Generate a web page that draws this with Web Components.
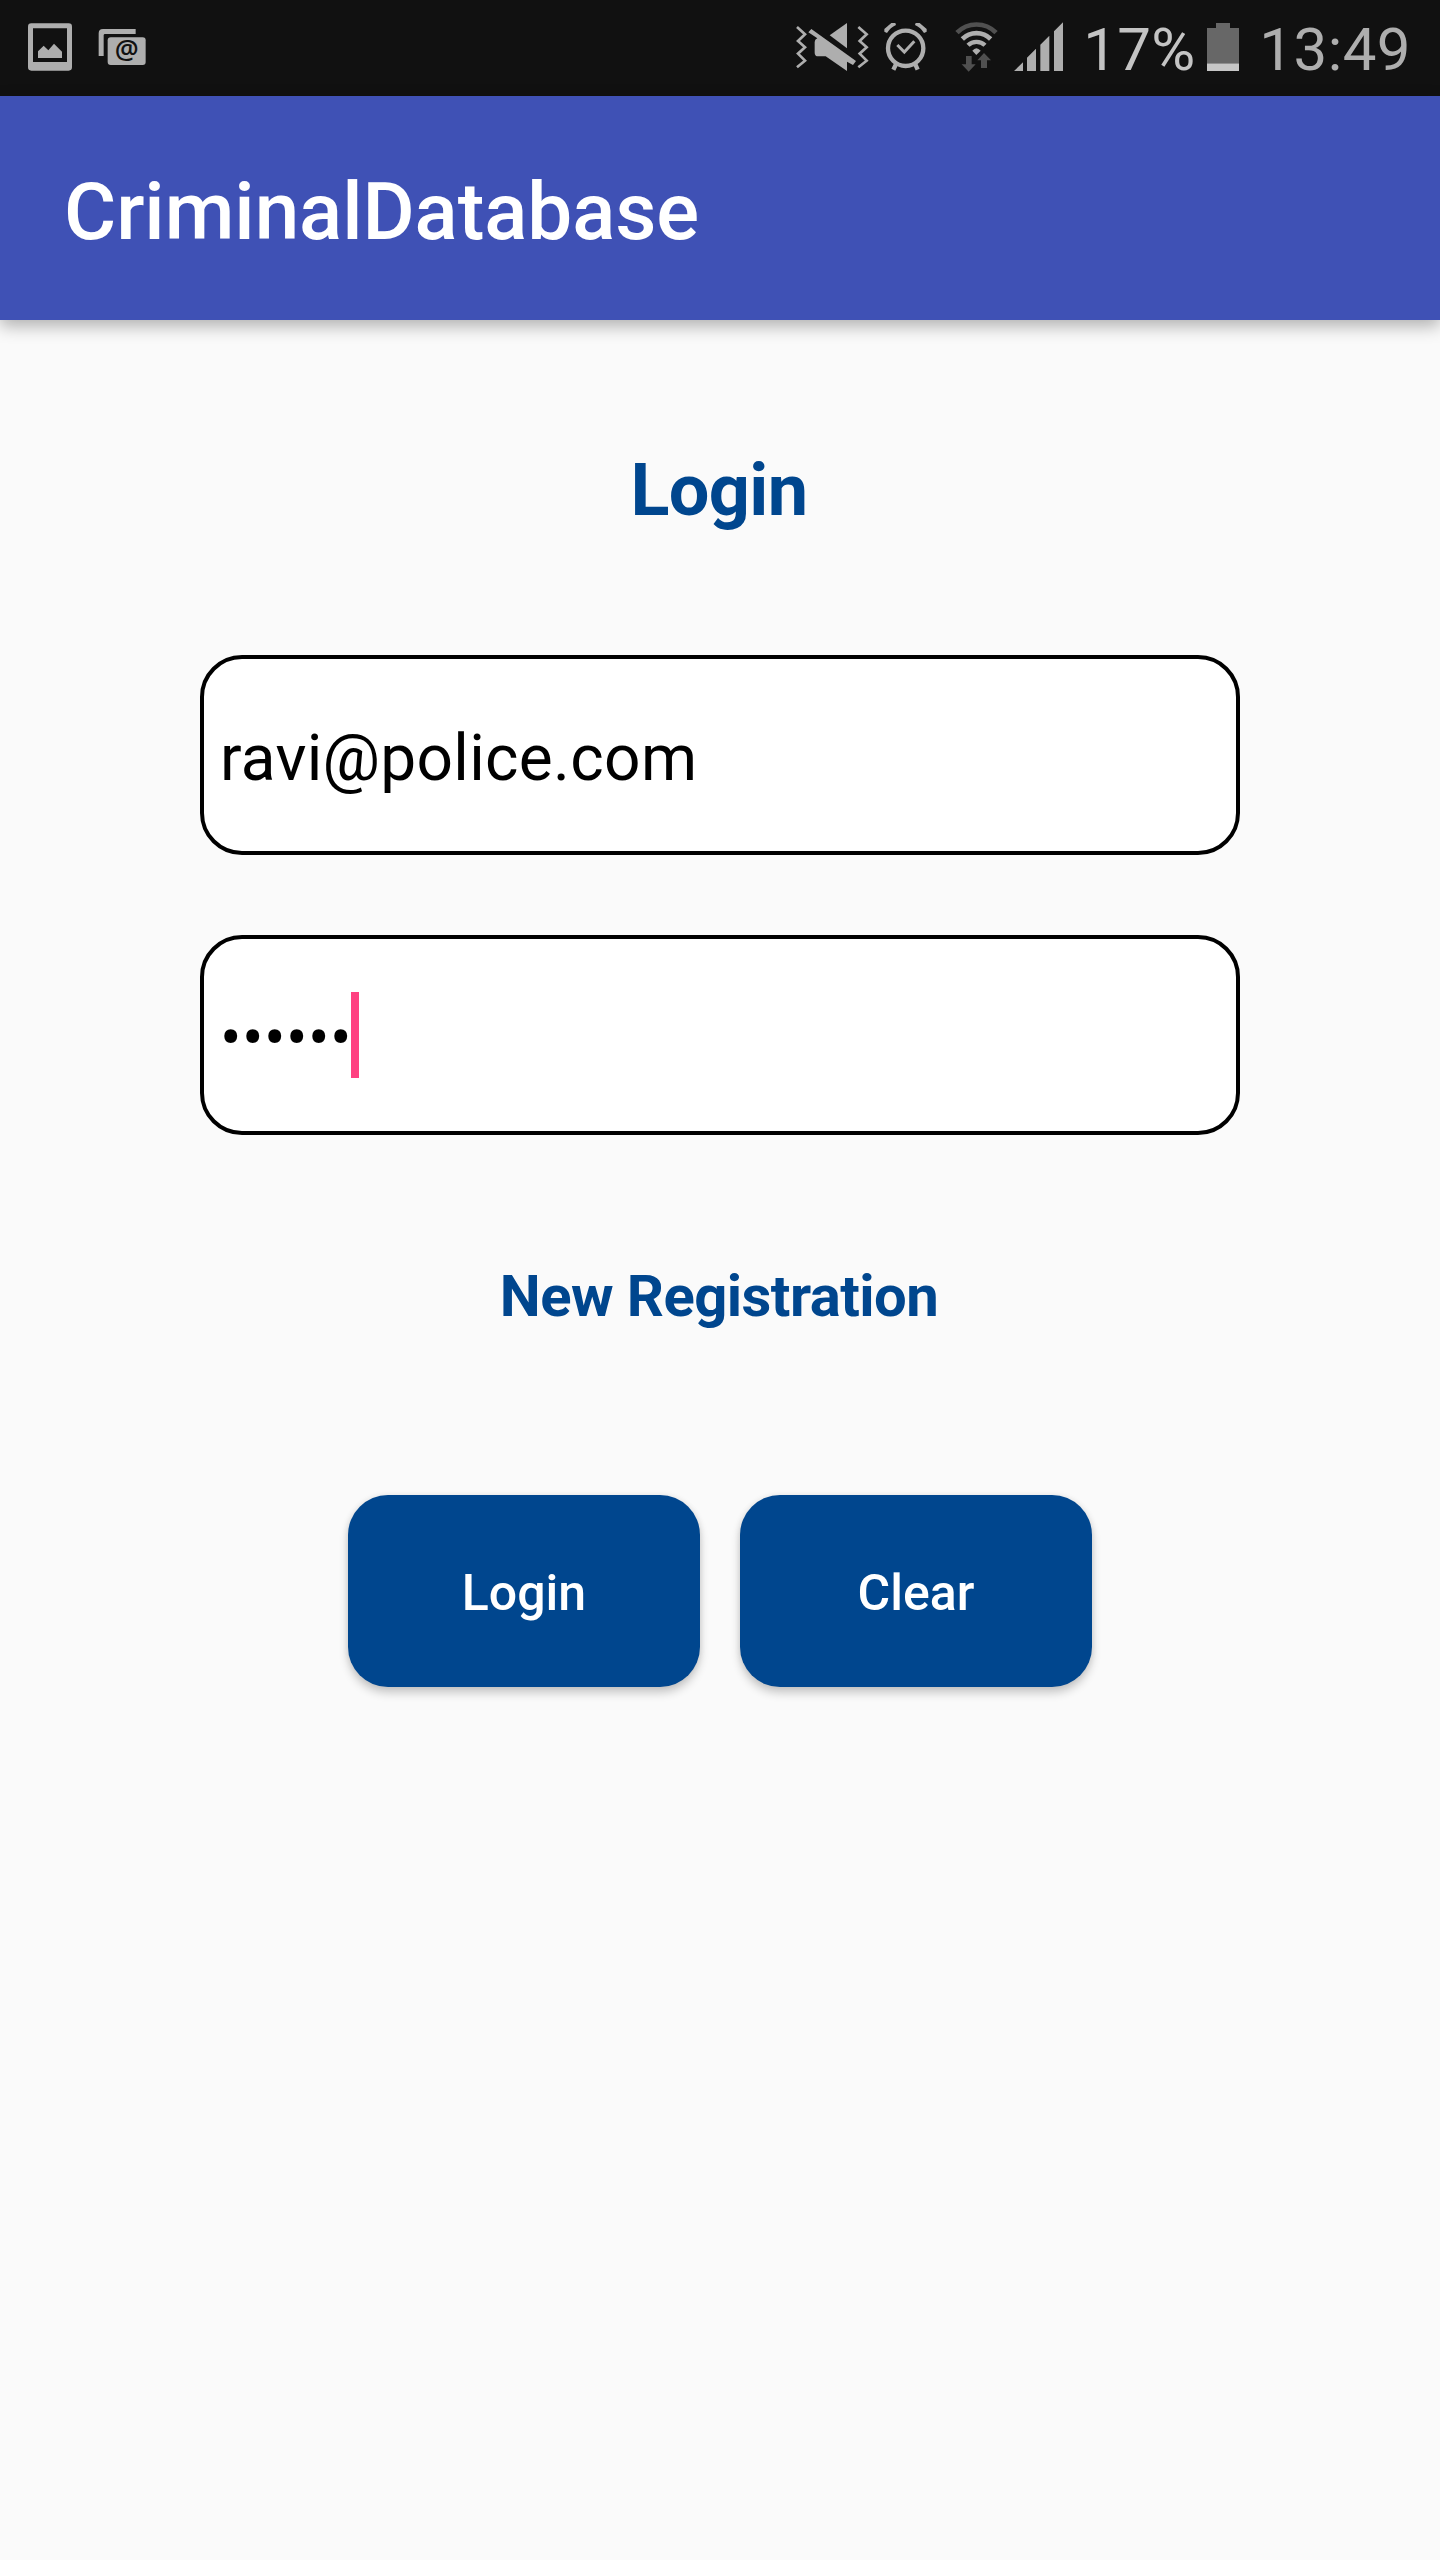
<!DOCTYPE html>
<html lang="en">
<head>
<meta charset="utf-8">
<title>CriminalDatabase</title>
<style>
html,body{margin:0;padding:0;background:#fafafa}
body{width:1440px;height:2560px;overflow:hidden;font-family:Roboto,"Liberation Sans",sans-serif}
</style>
</head>
<body>
<login-screen></login-screen>
<script>
const define = (name, html) => customElements.define(name, class extends HTMLElement {
  constructor() {
    super();
    const t = document.createElement('template');
    t.innerHTML = html;
    this.attachShadow({mode: 'open'}).appendChild(t.content.cloneNode(true));
  }
});

// Status icons: [viewBox x, viewBox width, drawing]; three units per pixel, 150 units tall
const icons = {
  image: [84, 132, `<path fill-rule="evenodd" d="M94 70H206Q216 70 216 80V202Q216 212 206 212H94Q84 212 84 202V80Q84 70 94 70ZM99 85V186H201V85Z"/><path d="M114 154L131 137L145 151L162 131L186 155V174H114Z"/>`],
  camera: [294, 145, `<path d="M296 168V100Q296 87 309 87H407V102H315Q311 102 311 106V168Z"/><rect x="323" y="112" width="114" height="83" rx="9"/><text x="380" y="176" text-anchor="middle" font-family="Open Sans,Noto Sans,sans-serif" font-weight="600" font-size="80" fill="#111">@</text>`],
  mute: [48, 219, `<path d="M149 106L201 69V145Z"/><path d="M94 87L228 183L219 195L201 185V213L137 169H115Q104 169 104 158V126Q104 118 112 115L85 97Z"/><path fill="none" stroke="#aeaeae" stroke-width="8" d="M51 81L75 103L54 123L75 142L54 161L75 182L51 202M235 81L260 103L239 123L260 142L239 161L260 182L235 202"/>`],
  alarm: [312, 129, `<g fill="none" stroke="#aeaeae"><circle cx="377" cy="145" r="53" stroke-width="13"/><path stroke-width="9" d="M352 135L373 156L403 124"/><path stroke-width="13" d="M348 193L340 209M406 193L413 209"/></g><path d="M313 87L334 69H346L348 75Q331 83 321 99L313 95ZM440 87L419 69H407L405 75Q422 83 432 99L440 95Z"/>`],
  wifi: [75, 129, `<g fill="none" stroke="#aeaeae" stroke-width="14"><path stroke="#505050" d="M81 98A82 82 0 0 1 198 98"/><path d="M97 117A60 60 0 0 1 182 117"/><path stroke-width="13" d="M114 136A36 36 0 0 1 165 136"/></g><path d="M127 152Q139 137 152 152L139 165Z"/><path fill="#505050" d="M108 168H125V193H137L116 215L95 193H108ZM162 159L183 181H171V204H153V181H142Z"/>`],
  signal: [252, 148, `<path d="M252 213L279 187V213ZM291 213V173L318 146V213ZM331 213V134L358 107V213ZM372 213V94L399 67V213Z"/>`],
  battery: [411, 96, `<path fill="#676767" d="M411 84H438V69H480V84H507V190H411Z"/><path fill="#c6c6c6" d="M411 190H507V213H411Z"/>`]
};
customElements.define('status-icon', class extends HTMLElement {
  connectedCallback() {
    const [x, w, art] = icons[this.getAttribute('name')];
    this.attachShadow({mode: 'open'}).innerHTML = `<style>:host{display:block;flex:none}svg{display:block}</style>
      <svg width="${w / 3}" height="50" viewBox="${x} 66 ${w} 150" fill="#aeaeae">${art}</svg>`;
  }
});

define('status-bar', `<style>
:host{display:flex;box-sizing:border-box;height:96px;background:#111;padding:22px 0 0 28px;align-items:flex-start;justify-content:space-between}
div{display:flex;align-items:flex-start}
.left{gap:26px}
.right{width:644px}
span{font-size:60px;line-height:71px;margin-top:-8px;white-space:nowrap;color:#aeaeae}
.pct{color:#c4c4c4;width:124px;margin-left:20px;letter-spacing:.3px}
.time{margin-left:20px;letter-spacing:.45px}
</style>
<div class="left"><status-icon name="image"></status-icon><status-icon name="camera"></status-icon></div>
<div class="right">
<status-icon name="mute"></status-icon>
<status-icon name="alarm" style="margin-left:15px"></status-icon>
<status-icon name="wifi" style="margin-left:28px"></status-icon>
<status-icon name="signal" style="margin-left:16px"></status-icon>
<span class="pct">17%</span>
<status-icon name="battery"></status-icon>
<span class="time">13:49</span>
</div>`);

define('app-bar', `<style>
:host{display:block;box-sizing:border-box;height:224px;padding:69px 64px 0;background:#3f51b5;color:#fff;font-size:80px;line-height:94px;font-weight:500;letter-spacing:-.07px;box-shadow:0 6px 16px rgba(0,0,0,.3)}
</style><slot></slot>`);

define('text-field', `<style>
:host{display:flex;box-sizing:border-box;width:1040px;height:200px;border:4px solid #000;border-radius:42px;background:#fff;padding:62px 16px 0;align-items:flex-start;font-size:64px;line-height:75px;letter-spacing:.3px;color:#000}
i{display:none;width:8px;height:86px;margin:-9px 0 0 -1px;background:#ff4081}
:host([focused]){letter-spacing:.4px}
:host([focused]) i{display:block}
</style><span><slot></slot></span><i></i>`);

define('raised-button', `<style>
:host{display:block;box-sizing:border-box;width:352px;height:192px;padding-top:69px;border-radius:40px;background:#00468e;color:#fff;text-align:center;font-size:50px;line-height:58px;font-weight:500;box-shadow:0 6px 10px rgba(0,0,0,.2),0 0 6px rgba(0,0,0,.08)}
</style><slot></slot>`);

define('login-screen', `<style>
:host{display:flex;flex-direction:column;height:2560px;background:#fafafa}
main{display:flex;flex-direction:column;align-items:center;padding-top:128px}
h1,a{margin:0;color:#00468e;font-weight:700}
h1{font-size:72px;line-height:85px;letter-spacing:-.6px;padding-right:2px}
.fields{display:flex;flex-direction:column;gap:80px;margin-top:122px}
a{font-size:58px;line-height:68px;letter-spacing:-.55px;padding-right:2px;margin-top:127px}
.buttons{display:flex;gap:40px;margin-top:165px}
</style>
<status-bar></status-bar>
<app-bar>CriminalDatabase</app-bar>
<main>
<h1>Login</h1>
<div class="fields"><text-field>ravi@police.com</text-field><text-field focused>••••••</text-field></div>
<a>New Registration</a>
<div class="buttons"><raised-button>Login</raised-button><raised-button>Clear</raised-button></div>
</main>`);
</script>
</body>
</html>
